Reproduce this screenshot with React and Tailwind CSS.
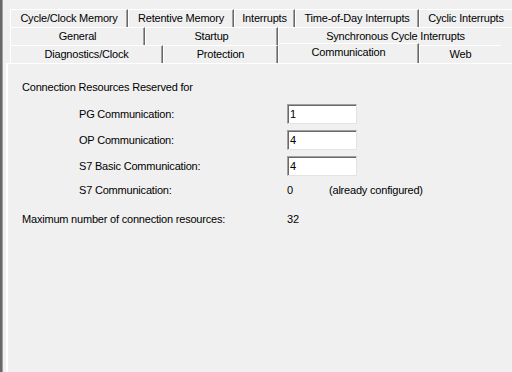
import React from "react";

const font = { fontFamily: '"Liberation Sans", Arial, sans-serif' };

function Tab({ w, label, last, selected }) {
  return (
    <div
      className={`flex shrink-0 items-center justify-center border-t border-l border-t-white border-l-white ${
        last ? "" : "border-r border-r-[#696969] shadow-[inset_-1px_0_0_#a0a0a0]"
      } ${selected ? "h-[20px] -mt-[2px] pb-[2px]" : "h-full"} whitespace-nowrap`}
      style={{ width: w }}
    >
      {label}
    </div>
  );
}

function Row({ tabs }) {
  return (
    <div className="flex h-[18px] items-end pl-[7px]">
      {tabs.map((t, i) => (
        <Tab key={i} w={t[1]} label={t[0]} last={i === tabs.length - 1} selected={t[2]} />
      ))}
    </div>
  );
}

function Field({ value }) {
  return (
    <div className="flex h-[20px] w-[70px] items-center border border-t-[#a0a0a0] border-l-[#a0a0a0] border-r-[#e3e3e3] border-b-[#e3e3e3] bg-white pl-[2px] shadow-[inset_1px_1px_0_#696969]">
      {value}
    </div>
  );
}

export default function App() {
  return (
    <div className="flex h-[372px] w-[512px] overflow-hidden bg-[#f0f0f0] text-[11px] tracking-[-0.2px] text-black" style={font}>
      <div className="w-[2px] shrink-0 bg-[#696969]" />
      <div className="w-[1px] shrink-0 bg-[#a0a0a0]" />
      <div className="flex min-w-0 flex-1 flex-col pt-[9px]">
        <Row
          tabs={[
            ["Cycle/Clock Memory", 118],
            ["Retentive Memory", 106],
            ["Interrupts", 61],
            ["Time-of-Day Interrupts", 124],
            ["Cyclic Interrupts", 93],
          ]}
        />
        <Row
          tabs={[
            ["General", 135],
            ["Startup", 133],
            ["Synchronous Cycle Interrupts", 234],
          ]}
        />
        <Row
          tabs={[
            ["Diagnostics/Clock", 153],
            ["Protection", 115],
            ["Communication", 141, true],
            ["Web", 82],
          ]}
        />
        <div className="ml-[3px] flex flex-1 flex-col border-t border-l-2 border-white pl-[14px] pt-[13px]">
          <div className="flex h-[20px] items-center">Connection Resources Reserved for</div>
          <div className="mt-[7px] flex h-[20px] items-center">
            <div className="w-[265px] pl-[57px]">PG Communication:</div>
            <Field value="1" />
          </div>
          <div className="mt-[6px] flex h-[20px] items-center">
            <div className="w-[265px] pl-[57px]">OP Communication:</div>
            <Field value="4" />
          </div>
          <div className="mt-[6px] flex h-[20px] items-center">
            <div className="w-[265px] pl-[57px]">S7 Basic Communication:</div>
            <Field value="4" />
          </div>
          <div className="mt-[4px] flex h-[20px] items-center">
            <div className="w-[265px] pl-[57px]">S7 Communication:</div>
            <div className="w-[42px]">0</div>
            <div>(already configured)</div>
          </div>
          <div className="mt-[9px] flex h-[20px] items-center">
            <div className="w-[265px]">Maximum number of connection resources:</div>
            <div>32</div>
          </div>
        </div>
      </div>
    </div>
  );
}
